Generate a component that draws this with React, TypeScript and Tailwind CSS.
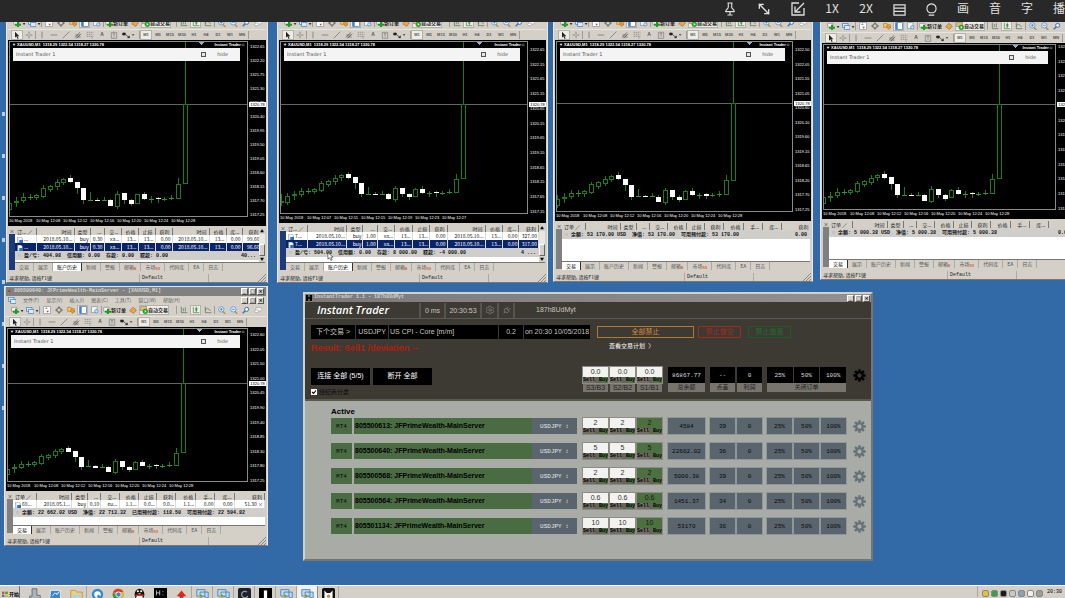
import { useState } from 'react'
import type { ReactNode } from 'react'
import clsx from 'clsx'
import { MoveDiagonal2, Settings, Plug } from 'lucide-react'

type Candle = { x: number; high: number; low: number; top: number; bottom: number; full?: boolean }

// x is counted in bars from the local peak, heights in thirds of a pixel
const candles: Candle[] = [
  { x: -10, high: 150, low: 188, top: 172, bottom: 180 },
  { x: -9, high: 145, low: 185, top: 157, bottom: 178 },
  { x: -8, high: 140, low: 170, top: 151, bottom: 155 },
  { x: -7, high: 128, low: 158, top: 139, bottom: 152 },
  { x: -6, high: 130, low: 150, top: 139, bottom: 139 },
  { x: -5, high: 130, low: 150, top: 134, bottom: 142 },
  { x: -4, high: 105, low: 142, top: 112, bottom: 140 },
  { x: -3, high: 103, low: 125, top: 106, bottom: 119 },
  { x: -2, high: 85, low: 118, top: 95, bottom: 110 },
  { x: -1, high: 84, low: 105, top: 86, bottom: 97 },
  { x: 0, high: 75, low: 98, top: 83, bottom: 96, full: true },
  { x: 1, high: 94, low: 132, top: 94, bottom: 113, full: true },
  { x: 2, high: 114, low: 160, top: 114, bottom: 150, full: true },
  { x: 3, high: 125, low: 150, top: 148, bottom: 148 },
  { x: 4, high: 144, low: 152, top: 148, bottom: 152, full: true },
  { x: 5, high: 140, low: 152, top: 149, bottom: 149 },
  { x: 6, high: 146, low: 168, top: 150, bottom: 167, full: true },
  { x: 7, high: 122, low: 176, top: 130, bottom: 170 },
  { x: 8, high: 129, low: 160, top: 129, bottom: 150, full: true },
  { x: 9, high: 145, low: 168, top: 150, bottom: 161, full: true },
  { x: 10, high: 130, low: 160, top: 132, bottom: 160 },
  { x: 11, high: 124, low: 148, top: 132, bottom: 146, full: true },
  { x: 12, high: 138, low: 158, top: 146, bottom: 146 },
  { x: 13, high: 140, low: 158, top: 143, bottom: 147, full: true },
  { x: 14, high: 140, low: 152, top: 146, bottom: 146 },
  { x: 15, high: 133, low: 150, top: 143, bottom: 143 },
  { x: 16, high: 82, low: 146, top: 100, bottom: 145 },
]

type ChartData = {
  height: string
  pad: string
  line: number
  peakX: number
  peakY: number
  scale: number
  prices: string[]
  times: string[]
}

function Candles({ line, peakX, peakY, scale }: ChartData) {
  const y = (v: number) => Math.round(peakY + ((v - 83) / 3) * scale)
  const x = (n: number) => Math.round(peakX + n * 6.74)
  return (
    <svg className="absolute inset-0 h-full w-full" shapeRendering="crispEdges">
      <rect x="0" y={line} width="100%" height="1" fill="#5f6663" />
      {candles.map((c) => (
        <g key={c.x}>
          <rect x={x(c.x)} y={y(c.high)} width="1" height={Math.max(1, y(c.low) - y(c.high))} fill="#1f7a22" />
          {c.full ? (
            <rect x={x(c.x) - 2} y={y(c.top)} width="5" height={Math.max(1, y(c.bottom) - y(c.top))} fill="#fff" />
          ) : c.top === c.bottom ? (
            <rect x={x(c.x) - 2} y={y(c.top)} width="5" height="1" fill="#2c9a30" />
          ) : (
            <rect
              x={x(c.x) - 1.5}
              y={y(c.top) + 0.5}
              width="4"
              height={Math.max(1, y(c.bottom) - y(c.top) - 1)}
              fill="#000"
              stroke="#1f7a22"
            />
          )}
        </g>
      ))}
      <rect x={x(17)} y="0" width="1" height={line} fill="#168018" />
      <rect x={x(17) - 1.5} y={line + 0.5} width="4" height={y(97) - line} fill="#000" stroke="#168018" />
      <path d={`M${x(17) + 14} 0h5l-2.5 3z`} fill="#8fb0c8" />
    </svg>
  )
}

function Chart(props: ChartData & { id: string }) {
  const { id, height, pad, line, prices, times } = props
  return (
    <div className={clsx('flex shrink-0 overflow-hidden bg-black pt-px pl-px font-["Liberation_Sans"] text-[4px] text-white', height)}>
      <div className="flex min-w-0 flex-1 flex-col">
        <div className="relative flex-1 overflow-hidden border border-[#8a8a8a]">
          <Candles {...props} />
          <div className="relative flex h-[6px] items-center justify-between pr-[2px] pl-[2px] leading-[6px] font-bold">
            <span>▼ XAUUSD,M1&nbsp; 1318.29 1322.54 1318.27 1320.78</span>
            <span>Instant Trader☺</span>
          </div>
          <div className="relative mr-[7px] ml-[3px] flex h-[13px] items-center bg-[#f4f4f4] px-[3px] font-['DejaVu_Sans'] text-[5px] text-[#555]">
            <span className="flex-1">Instant Trader 1</span>
            <input
              id={id}
              type="checkbox"
              className="mr-[11px] size-[5px] appearance-none border border-[#555] bg-[#e4e4ee]"
            />
            <label htmlFor={id} className="mr-[9px]">hide</label>
          </div>
        </div>
        <div className="flex h-[9px] items-start leading-[7px] whitespace-nowrap">
          {times.map((t) => (
            <span key={t} className="w-[27px] shrink-0">{t}</span>
          ))}
        </div>
      </div>
      <div className={clsx('relative flex w-[18px] shrink-0 flex-col justify-between pl-[2px] leading-[6px]', pad)}>
        {prices.map((p) => (
          <span key={p}>{p}</span>
        ))}
        <span className="absolute left-px w-[17px] bg-white text-center leading-[5px] text-black" style={{ top: line - 1 }}>
          1320.78
        </span>
      </div>
    </div>
  )
}

function Sep() {
  return <i className="h-[8px] w-px shrink-0 bg-[#a09c94]" />
}

const glyphs: Record<string, ReactNode> = {
  add: <><path d="M1 2h8v6H1z" fill="#f4f4f4" stroke="#888" /><path d="M6 4h3v3h3v3H9v3H6v-3H3V7h3z" fill="#1d9b22" /></>,
  windows: <><rect x="1" y="2" width="8" height="6" fill="#dceafa" stroke="#3a78c0" /><rect x="4" y="5" width="8" height="6" fill="#dceafa" stroke="#3a78c0" /></>,
  market: <><rect x="1" y="1" width="10" height="10" fill="#fff" stroke="#7d93ae" /><path d="M3 4l2-2 2 2z" fill="#2a9a30" /><path d="M5 7h4l-2 3z" fill="#d04020" /></>,
  target: <><circle cx="6" cy="6" r="3.5" fill="none" stroke="#555" strokeWidth="1.3" /><path d="M6 0v4M6 8v4M0 6h4M8 6h4" stroke="#555" /></>,
  folder: <><path d="M1 2h5l1 2h4v4H1z" fill="#f0c860" stroke="#b08020" /><path d="M5 6l2-2 2 3 3 1-4 3z" fill="#f0a030" stroke="#b07010" /></>,
  panel: <><rect x="1" y="1" width="10" height="10" fill="#fff" stroke="#2f6fb8" /><rect x="1" y="1" width="3" height="10" fill="#3a80cc" /></>,
  tester: <><rect x="1" y="1" width="8" height="9" fill="#eef4fa" stroke="#7d93ae" /><circle cx="8" cy="8" r="2.5" fill="#cfe4f6" stroke="#4a7db0" /></>,
  diamond: <path d="M1 7l5-5 5 4-4 5z" fill="#e8a848" stroke="#a86818" />,
  auto: <><rect x="1" y="1" width="9" height="6" fill="#e0c058" stroke="#888" /><circle cx="8" cy="8" r="4" fill="#23a02c" /><path d="M7 6l3 2-3 2z" fill="#fff" /></>,
  bars: <path d="M2 1v9h9M5 3v5M8 2v6" stroke="#4c6a4c" fill="none" />,
  candle: <><path d="M2 1v9h9M6.500 1v8" stroke="#387038" fill="none" /><rect x="5" y="3" width="3" height="4" fill="#2da033" /></>,
  curve: <path d="M2 1v9h9M2 7c2-6 4-3 8 0" stroke="#4c6a4c" fill="none" />,
  zoomIn: <><path d="M7 8l4 4" stroke="#c08a30" strokeWidth="2" /><circle cx="5" cy="5" r="4" fill="#e2f0fb" stroke="#3a80cc" /><path d="M3 5h4M5 3v4" stroke="#2868b0" /></>,
  zoomOut: <><path d="M7 8l4 4" stroke="#c08a30" strokeWidth="2" /><circle cx="5" cy="5" r="4" fill="#e2f0fb" stroke="#3a80cc" /><path d="M3 5h4" stroke="#2868b0" /></>,
  search: <><path d="M5 7l-4 4" stroke="#3a70b0" strokeWidth="2" /><circle cx="7" cy="5" r="3" fill="#f4f8fc" stroke="#3a70b0" strokeWidth="1.5" /></>,
  chat: <><ellipse cx="7" cy="5" rx="5" ry="3" fill="#f4f4f4" stroke="#999" /><ellipse cx="4" cy="8" rx="3" ry="2" fill="#fff" stroke="#999" /></>,
  cursor: <path d="M3 1v9l2-2 2 4 1.500-1-2-3h3z" fill="#222" />,
  cross: <path d="M6 1v4M6 7v4M1 6h4M7 6h4" stroke="#666" />,
  vline: <path d="M6 1v10" stroke="#666" />,
  hline: <path d="M1 6h10" stroke="#666" />,
  slope: <path d="M1 11L11 1" stroke="#666" />,
  channel: <path d="M1 10L9 2M4 11l7-7M2 6h7M3 9h7" stroke="#555" />,
  fibo: <path d="M1 2h10M1 5h10M1 8h10M9 8v4" stroke="#777" strokeDasharray="2 1" />,
  label: <path d="M2 2h8v9H2zM4 4h4M6 4v5" stroke="#777" fill="none" />,
  arrows: <path d="M1 3h4v3H1zM6 6l5 4M8 10h3V7" stroke="#222" fill="#222" />,
}

function Glyph({ name }: { name: string }) {
  return <svg viewBox="0 0 12 12" className="size-[8px] shrink-0">{glyphs[name]}</svg>
}

function ToolButton({ name, pressed, wide }: { name: string; pressed?: boolean; wide?: boolean }) {
  return (
    <button
      aria-label={name}
      className={clsx(
        'flex h-[10px] shrink-0 items-center justify-center',
        wide ? 'w-[12px]' : 'w-[11px]',
        pressed && 'border border-[#b5b1a9] bg-[#eeece6]'
      )}
    >
      <Glyph name={name} />
    </button>
  )
}

function Toolbars() {
  return (
    <>
      <div className="flex h-[12px] shrink-0 items-center gap-px overflow-hidden px-[3px] text-[5px] font-bold text-[#222]">
        <ToolButton name="add" />
        <span className="text-[4px]">▾</span>
        <ToolButton name="windows" />
        <span className="text-[4px]">▾</span>
        <Sep />
        <ToolButton name="market" />
        <ToolButton name="target" />
        <ToolButton name="folder" />
        <ToolButton name="panel" pressed />
        <ToolButton name="tester" />
        <Sep />
        <button className="flex items-center whitespace-nowrap"><Glyph name="add" />新订单</button>
        <ToolButton name="diamond" />
        <button className="flex h-[10px] items-center border border-[#b5b1a9] bg-[#eeece6] whitespace-nowrap"><Glyph name="auto" />自动交易</button>
        <i className="w-[5px]" />
        <Sep />
        <ToolButton name="bars" />
        <ToolButton name="candle" pressed />
        <ToolButton name="curve" />
        <Sep />
        <ToolButton name="zoomIn" />
        <ToolButton name="zoomOut" />
        <ToolButton name="search" />
        <ToolButton name="chat" />
      </div>
      <div className="flex h-[11px] shrink-0 items-center overflow-hidden border-t border-[#e8e5df] px-[3px] font-['Liberation_Sans'] text-[4px] font-bold text-[#555]">
        <ToolButton name="cursor" pressed wide />
        <ToolButton name="cross" wide />
        <Sep />
        <ToolButton name="vline" wide />
        <ToolButton name="hline" wide />
        <ToolButton name="slope" wide />
        <ToolButton name="channel" wide />
        <ToolButton name="fibo" wide />
        <button className="w-[12px] text-[5px]">A</button>
        <ToolButton name="label" wide />
        <ToolButton name="arrows" wide />
        <span className="mr-[5px] text-[4px]">▾</span>
        <Sep />
        {['M1', 'M5', 'M15', 'M30', 'H1', 'H4', 'D1', 'W1', 'MN'].map((p, i) => (
          <button key={p} className={clsx('h-[10px] w-[12px] shrink-0', i === 0 && 'border border-[#b5b1a9] bg-[#eeece6]')}>
            {p}
          </button>
        ))}
        <Sep />
      </div>
    </>
  )
}

function WindowButtons() {
  return (
    <div className="flex shrink-0 gap-px font-['DejaVu_Sans'] text-[5px] leading-[5px] font-bold text-black">
      {['_', '□', '×'].map((b) => (
        <button key={b} className="h-[7px] w-[7px] border border-t-white border-r-[#555] border-b-[#555] border-l-white bg-[#d4d0c8]">
          {b}
        </button>
      ))}
    </div>
  )
}

type Column = { name: string; width: string; left?: boolean }

const historyColumns: Column[] = [
  { name: '订...  ∕', width: 'w-[21px]', left: true },
  { name: '时间', width: 'w-[38px]' },
  { name: '类型', width: 'w-[16px]' },
  { name: '...', width: 'w-[14px]' },
  { name: '交...', width: 'w-[17px]' },
  { name: '价格', width: 'w-[17px]' },
  { name: '止损', width: 'w-[17px]' },
  { name: '获利', width: 'w-[17px]' },
  { name: '时间', width: 'w-[37px]' },
  { name: '价格', width: 'w-[17px]' },
  { name: '库...', width: 'w-[16px]' },
  { name: '获利', width: 'w-[19px]' },
]

const tradeColumns: Column[] = [
  { name: '订单  ∕', width: 'w-[23px]', left: true },
  { name: '时间', width: 'w-[35px]' },
  { name: '类型', width: 'w-[16px]' },
  { name: '...', width: 'w-[13px]' },
  { name: '交...', width: 'w-[18px]' },
  { name: '价格', width: 'w-[19px]' },
  { name: '止损', width: 'w-[18px]' },
  { name: '获利', width: 'w-[19px]' },
  { name: '价格', width: 'w-[20px]' },
  { name: '手...', width: 'w-[19px]' },
  { name: '库...', width: 'w-[19px]' },
  { name: '获利', width: 'w-[30px]' },
]

const tabs = ['交易', '展示', '账户历史', '新闻', '警报', '邮箱', '市场', '代码库', 'EA', '日志']
const badges: Record<string, string> = { 邮箱: '6', 市场: '53' }

type Terminal = {
  id: string
  place: string
  title?: string
  history?: boolean
  rows: string[][]
  summary: string
  total: string
  chart: ChartData
}

function OrderTable({ history, rows, summary, total }: Terminal) {
  const columns = history ? historyColumns : tradeColumns
  return (
    <div className="flex min-h-0 flex-1 px-[1px] pt-[2px]">
      <div className="flex w-[6px] shrink-0 flex-col text-center text-[5px] leading-[6px]">
        <button>×</button>
        <div className={clsx('flex-1', history ? 'bg-[#1c3a7c]' : 'bg-[#808080]')} />
      </div>
      <div className="flex min-w-0 flex-1 flex-col">
        <div className="flex min-h-0 flex-1 overflow-hidden bg-white">
          <div className="min-w-0 flex-1">
            <table className="w-full table-fixed border-collapse text-[5px] leading-[8px] whitespace-nowrap text-[#222]">
              <thead className="bg-[#d4d0c8] leading-[7px]">
                <tr>
                  {columns.map((c, i) => (
                    <th
                      key={i}
                      className={clsx('overflow-hidden border-r border-[#777] pr-[2px] font-normal', c.width, c.left ? 'pl-[2px] text-left' : 'text-right')}
                    >
                      {c.name}
                    </th>
                  ))}
                </tr>
              </thead>
              <tbody>
                {rows.map((row, r) => (
                  <tr key={r} className={clsx(r === 1 && 'bg-[#0a246a] text-white')}>
                    {row.map((cell, i) => (
                      <td key={i} className={clsx('overflow-hidden border-r border-[#ddd] pr-px', i === 0 ? 'text-left' : 'text-right')}>
                        {i === 0 && (
                          <svg viewBox="0 0 8 8" className="mr-px ml-[2px] inline size-[6px] align-middle">
                            <path d="M1 0h4l2 2v6H1z" fill="#fff" stroke="#7d93ae" />
                            <path d="M3 4h5v4H3z" fill="#2f6fb8" />
                          </svg>
                        )}
                        {cell}
                      </td>
                    ))}
                  </tr>
                ))}
              </tbody>
            </table>
            <div className="flex h-[9px] items-center justify-between bg-[#d0cecb] pr-[3px] pl-[3px] font-['Liberation_Mono','Noto_Sans_CJK_SC',monospace] text-[5px] leading-[8px] font-bold whitespace-pre text-[#111]">
              <span className="overflow-hidden"><span className="font-normal text-[#777]">○ </span>{summary}</span>
              <span>{total}</span>
            </div>
          </div>
          {history && (
            <div className="flex w-[6px] shrink-0 flex-col justify-between bg-[#e9e7e2] text-center text-[4px] leading-[6px]">
              <button className="bg-[#d4d0c8]">▲</button>
              <div className="mt-auto h-[12px] border border-white border-r-[#666] border-b-[#666] bg-[#d4d0c8]" />
              <button className="bg-[#d4d0c8]">▼</button>
            </div>
          )}
        </div>
        <div className="flex h-[8px] shrink-0 items-center border-t border-[#777] text-[5px] leading-[7px] whitespace-nowrap text-[#555]">
          {tabs.map((t, i) => {
            const active = history ? i === 2 : i === 0
            return (
              <button
                key={t}
                className={clsx('h-[8px] border-r px-[4px]', active ? 'border-[#333] bg-white text-black' : 'border-[#aaa]')}
              >
                {t}
                {badges[t] && <sub className="text-[4px] font-bold text-[#e0602a]">{badges[t]}</sub>}
              </button>
            )
          })}
        </div>
      </div>
    </div>
  )
}

function TerminalWindow(props: Terminal) {
  const { id, place, title, chart } = props
  return (
    <section className={clsx('absolute flex flex-col overflow-hidden border border-[#e9e7e2] border-b-[#777] bg-[#d4d0c8] pr-px pl-px', place)}>
      {title && (
        <>
          <div className="flex h-[9px] shrink-0 items-center justify-between bg-[#808080] px-[2px] font-['Liberation_Mono'] text-[5px] font-bold text-[#d8d4cc]">
            <span><span className="text-[#d03020]">▲</span> {title}</span>
            <WindowButtons />
          </div>
          <nav className="flex h-[8px] shrink-0 items-center gap-[7px] px-[2px] text-[5px] leading-[8px] whitespace-nowrap text-[#666]">
            <Glyph name="windows" />
            {['文件(F)', '显示(V)', '插入(I)', '图表(C)', '工具(T)', '窗口(W)', '帮助(H)'].map((m) => (
              <button key={m}>{m}</button>
            ))}
            <span className="flex-1" />
            <WindowButtons />
          </nav>
        </>
      )}
      <Toolbars />
      <Chart id={id} {...chart} />
      <OrderTable {...props} />
      <footer className="mt-[3px] flex h-[9px] shrink-0 items-center text-[5px] leading-[8px] text-[#222]">
        <span className="flex-1 pl-px">寻求帮助, 请按F1键</span>
        <span className="w-[69px] border-l border-[#aaa] pl-[2px] font-['Liberation_Mono']">Default</span>
        <span className="w-[50px] border-l border-[#aaa]">&nbsp;</span>
        <svg viewBox="0 0 8 8" className="size-[8px]"><path d="M0 8l8-8M3 8l5-5M6 8l2-2" stroke="#888" /></svg>
      </footer>
    </section>
  )
}

const times = ['10 May 2018', '10 May 12:08', '10 May 12:12', '10 May 12:16', '10 May 12:20', '10 May 12:24', '10 May 12:28']

const terminals: Terminal[] = [
  {
    id: 'hide-a',
    place: '-top-[6px] left-[6px] h-[267px] w-[262px]',
    history: true,
    rows: [
      ['...', '2018.05.10...', 'buy', '0.30', 'xa...', '13...', '13...', '0.00', '2018.05.10...', '13...', '0.00', '99.60'],
      ['...', '2018.05.10...', 'buy', '0.30', 'xa...', '13...', '13...', '0.00', '2018.05.10...', '13...', '0.00', '96.60'],
    ],
    summary: '盈/亏: 404.98  信用额: 0.00  存款: 0.00  取款: 0.00',
    total: '40...',
    chart: {
      height: 'h-[186px]', pad: 'pt-[3px] pb-[8px]', line: 62, peakX: 60, peakY: 136, scale: 1, times,
      prices: ['1322.65', '1322.20', '1321.75', '1321.30', '1320.85', '1320.40', '1319.95', '1319.50', '1319.05', '1318.60', '1318.15', '1317.70', '1317.25'],
    },
  },
  {
    id: 'hide-b',
    place: '-top-[6px] left-[277px] h-[267px] w-[271px]',
    history: true,
    rows: [
      ['7...', '2018.05.10...', 'buy', '1.00', 'xa...', '13...', '13...', '0.00', '2018.05.10...', '13...', '0.00', '327.00'],
      ['7...', '2018.05.10...', 'buy', '1.00', 'xa...', '13...', '13...', '0.00', '2018.05.10...', '13...', '0.00', '317.00'],
    ],
    summary: '盈/亏: 504.00  信用额: 0.00  存款: 8 000.00  取款: -4 000.00',
    total: '4 ...',
    chart: {
      height: 'h-[183px]', pad: 'pt-[6px] pb-[8px]', line: 62, peakX: 67, peakY: 132, scale: 0.9,
      times: ['10 May 2018', '10 May 12:07', '10 May 12:11', '10 May 12:15', '10 May 12:19', '10 May 12:23', '10 May 12:27'],
      prices: ['1322.65', '1322.15', '1321.65', '1321.15', '1320.65', '1320.15', '1319.65', '1319.15', '1318.65', '1318.15', '1317.65', '1317.15'],
    },
  },
  {
    id: 'hide-c',
    place: '-top-[6px] left-[553px] h-[266px] w-[260px]',
    rows: [],
    summary: '余额: 53 170.00 USD  净值: 53 170.00  可用预付款: 53 170.00',
    total: '0.00',
    chart: {
      height: 'h-[181px]', pad: 'pt-[6px] pb-[8px]', line: 61, peakX: 61, peakY: 133, scale: 0.97, times,
      prices: ['1322.50', '1322.05', '1321.55', '1321.05', '1320.60', '1320.10', '1319.60', '1319.15', '1318.65', '1318.20', '1317.70', '1317.25'],
    },
  },
  {
    id: 'hide-d',
    place: '-top-[3px] left-[820px] h-[261px] w-[256px]',
    rows: [],
    summary: '余额: 5 000.38 USD  净值: 5 000.38  可用预付款: 5 000.38',
    total: '0.00',
    chart: {
      height: 'h-[176px]', pad: 'pb-[7px]', line: 59, peakX: 60, peakY: 129, scale: 0.95, times,
      prices: ['1322.60', '1322.10', '1321.60', '1321.15', '1320.65', '1320.15', '1319.65', '1319.15', '1318.70', '1318.20', '1317.70', '1317.25'],
    },
  },
  {
    id: 'hide-e',
    place: 'top-[264px] left-[4px] h-[260px] w-[264px]',
    title: '805500640: JFPrimeWealth-MainServer - [XAUUSD,M1]',
    rows: [['69...', '2018.05.1...', 'buy', '0.10', 'eu...', '1.1...', '0.0...', '0.0...', '1.1...', '0.00', '0.00', '51.30  ×']],
    summary: '余额: 22 662.02 USD  净值: 22 713.32  已用预付款: 118.50  可用预付款: 22 594.82',
    total: '',
    chart: {
      height: 'h-[164px]', pad: 'pt-[4px] pb-[7px]', line: 54, peakX: 60, peakY: 119, scale: 0.85, times,
      prices: ['1322.60', '1322.05', '1321.50', '1321.00', '1320.45', '1319.90', '1319.40', '1318.85', '1318.30', '1317.80', '1317.25'],
    },
  },
]

const accounts = [
  { login: '805500613', lot: '2', balance: '4584', spread: '39' },
  { login: '805500640', lot: '5', balance: '22662.02', spread: '36' },
  { login: '805500568', lot: '2', balance: '5000.38', spread: '39' },
  { login: '805500564', lot: '0.6', balance: '1451.37', spread: '34' },
  { login: '805501134', lot: '10', balance: '53170', spread: '36' },
]

function LotBox({ lot, label, green }: { lot: string; label: string; green?: boolean }) {
  return (
    <div className="flex h-[16px] w-[25px] flex-col bg-[#66635b] outline-1 outline-[#8e8b84]">
      <input
        aria-label={label}
        defaultValue={lot}
        className={clsx("h-[10px] w-full text-center font-['Liberation_Sans'] text-[7px] leading-[10px]", green ? 'bg-[#4c7040] text-[#141c10]' : 'bg-[#f2f2f0] text-[#333]')}
      />
      <div className="flex h-[6px] justify-between font-['Liberation_Mono'] text-[5px] leading-[6px] font-bold text-black">
        <button className="bg-[#726e66]">Sell</button>
        <button className="bg-[#55704b]">Buy</button>
      </div>
    </div>
  )
}

function ValueRow({ values, head }: { values: string[]; head?: boolean }) {
  const cell = clsx(
    "flex h-[16px] items-center justify-center font-['Liberation_Mono'] text-[6px]",
    head ? 'bg-black text-[#ddd]' : 'bg-[#59646c] text-[#080a0c] outline-1 outline-[#8f979b]',
  )
  const caption = 'h-[9px] bg-[#77746d] text-center text-[6px] leading-[9px] text-[#23211d]'
  return (
    <>
      <div className="ml-[6px] w-[37px]">
        <div className={cell}>{values[0]}</div>
        {head && <div className={caption}>总余额</div>}
      </div>
      <div className="ml-[5px] flex gap-[2px]">
        <div className="w-[25px]">
          <div className={cell}>{values[1]}</div>
          {head && <div className={caption}>点差</div>}
        </div>
        <div className="w-[25px]">
          <div className={cell}>{values[2]}</div>
          {head && <div className={caption}>利润</div>}
        </div>
      </div>
      <div className="ml-[5px] w-[79px]">
        <div className={clsx('grid grid-cols-3', head ? 'gap-px' : 'gap-[2px]')}>
          {['25%', '50%', '100%'].map((p) => (
            <button key={p} className={cell}>{p}</button>
          ))}
        </div>
        {head && <div className={caption}>关闭订单</div>}
      </div>
      <button aria-label="设置" className="ml-[7px] flex h-[16px] w-[13px] items-center">
        <GearIcon className={head ? 'text-black' : 'text-[#667078]'} />
      </button>
    </>
  )
}

function GearIcon({ className }: { className: string }) {
  return (
    <svg viewBox="0 0 26 26" className={clsx('size-[13px]', className)}>
      <mask id="gear-hole" maskUnits="userSpaceOnUse" x="0" y="0" width="26" height="26">
        <rect width="26" height="26" fill="#fff" />
        <rect x="8" y="8" width="10" height="10" rx="5" fill="#000" />
      </mask>
      <g fill="currentColor" mask="url(#gear-hole)">
        {[0, 45, 90, 135].map((a) => (
          <rect key={a} x="10.500" y="0.500" width="5" height="25" rx="1" transform={`rotate(${a} 13 13)`} />
        ))}
      </g>
      <circle cx="13" cy="13" r="6.500" fill="none" stroke="currentColor" strokeWidth="4" />
    </svg>
  )
}

function InstantTrader() {
  const [grouped, setGrouped] = useState(true)
  const black = 'flex h-[14px] items-center justify-center bg-black'
  return (
    <section className="absolute top-[270px] left-[303px] flex h-[269px] w-[570px] flex-col border-2 border-[#d4d0c8] border-r-[#77746f] border-b-[#77746f] font-['Liberation_Sans','Noto_Sans_CJK_SC',sans-serif] text-[7px] whitespace-nowrap text-[#c8c5be]">
      <div className="flex h-[8px] shrink-0 items-center bg-linear-to-r from-[#7b7b7b] to-[#929090] pr-[1px] font-['Liberation_Mono'] text-[5px] font-bold text-[#d4d0c8]">
        <svg viewBox="0 0 8 8" className="mr-[2px] ml-[1px] size-[6px]"><path d="M0 0h3v8H0zM5 0h3v8H5zM3 3h2v2H3z" fill="#000" /></svg>
        <span className="flex-1">InstantTrader 1.1 - 187h88dMyt</span>
        <WindowButtons />
      </div>

      <div className="shrink-0 border-b-2 border-[#5c5850] bg-[#3d3a34]">
        <header className="flex h-[17px] items-center border-b border-[#5c5a54]">
          <h1 className="w-[114px] pl-[12px] font-['Open_Sans',sans-serif] text-[11px] leading-[16px] font-semibold text-white italic">Instant Trader</h1>
          <span className="w-[25px] border-l-2 border-[#57544d] text-center leading-[15px]">0 ms</span>
          <span className="w-[36px] border-l-2 border-[#57544d] text-center leading-[15px]">20:30:53</span>
          <button aria-label="设置" className="flex h-[15px] w-[17px] items-center justify-center border-l-2 border-[#57544d] text-[#777]"><Settings size={10} strokeWidth={2} /></button>
          <button aria-label="连接" className="flex h-[15px] w-[18px] items-center justify-center border-x-2 border-[#57544d] text-[#888]"><Plug size={9} className="rotate-45" /></button>
          <span className="pl-[21px]">187h8UdMyt</span>
        </header>

        {/* next event */}
        <div className="mt-[6px] flex items-center gap-px pl-[6px]">
          <button className={clsx(black, 'w-[44px]')}>下个交易 &gt;</button>
          <div className={clsx(black, 'w-[32px]')}>USDJPY</div>
          <div className="flex h-[14px] w-[109px] items-center bg-black pl-px">US CPI - Core [m/m]</div>
          <div className={clsx(black, 'w-[24px]')}>0.2</div>
          <div className={clsx(black, 'w-[66px]')}>on 20:30 10/05/2018</div>
          <button className="ml-[6px] h-[12px] w-[97px] border border-[#b07a34] leading-[10px] text-[#cc8c3c]">全部禁止</button>
          <button className="ml-[3px] h-[12px] w-[43px] border border-[#9c2c1c] leading-[10px] text-[#a02c1c]">禁止做空</button>
          <button className="ml-[6px] h-[12px] w-[43px] border border-[#1d5c2a] leading-[10px] text-[#1f7030]">禁止做涨</button>
        </div>
        <div className="flex h-[20px] items-start pl-[6px]">
          <p className="w-[298px] pt-[3px] text-[9px] leading-[12px] font-bold text-[#b0200f]">Result: Sell1 /deviation --</p>
          <button className="pt-[3px] text-[6px] leading-[8px] text-white">查看交易计划 &nbsp;<span>〉</span></button>
        </div>

        <div className="mt-[8px] flex h-[32px] items-start pr-[5px] pl-[6px]">
          <div className="flex-1">
            <div className="mt-px flex gap-[3px] text-white">
              <button className="h-[17px] w-[59px] bg-black">连接 全部 (5/5)</button>
              <button className="h-[17px] w-[59px] bg-black">断开 全部</button>
            </div>
            <label className="mt-[3px] flex items-center gap-[2px] text-[6px] leading-[8px] text-[#0c0b0a]">
              <span className="relative flex size-[6px]">
                <input
                  type="checkbox"
                  checked={grouped}
                  onChange={(e) => setGrouped(e.target.checked)}
                  className="size-[6px] appearance-none bg-white"
                />
                {grouped && <svg viewBox="0 0 8 8" className="pointer-events-none absolute inset-0"><path d="M1.500 4l2 2 3-4" fill="none" stroke="#000" strokeWidth="1.500" /></svg>}
              </span>
              经纪商分类
            </label>
          </div>
          <div className="flex gap-[2px]">
            {['S3/B3', 'S2/B2', 'S1/B1'].map((s) => (
              <div key={s} className="w-[25px]">
                <LotBox lot="0.0" label={s} />
                <div className="h-[9px] bg-[#77746d] text-center leading-[9px] text-[#23211d]">{s}</div>
              </div>
            ))}
          </div>
          <ValueRow head values={['86867.77', '--', '0']} />
        </div>
      </div>

      <div className="flex-1 bg-[#a8aba6] pt-[5px] pr-[5px] pl-[26px]">
        <h2 className="text-[8px] leading-[12px] font-bold text-black">Active</h2>
        <div className="flex flex-col gap-[9px]">
          {accounts.map((a) => (
            <div key={a.login} className="flex h-[16px] items-stretch">
              <div className="flex w-[21px] items-center justify-center bg-[#4a6c43] font-['Liberation_Mono'] text-[6px] text-[#060a04]">MT4</div>
              <div className="ml-[2px] flex flex-1 items-center bg-[#4a6c43] pl-px font-bold text-black">{a.login}: JFPrimeWealth-MainServer</div>
              <button className="mr-[6px] w-[45px] bg-[#59646c] font-['Liberation_Mono'] text-[6px] text-[#e4e6e8]">USDJPY ↕</button>
              <div className="flex gap-[2px]">
                <LotBox lot={a.lot} label={a.login + ' S3'} />
                <LotBox lot={a.lot} label={a.login + ' S2'} />
                <LotBox lot={a.lot} label={a.login + ' S1'} green />
              </div>
              <ValueRow values={[a.balance, a.spread, '0']} />
            </div>
          ))}
        </div>
      </div>
    </section>
  )
}

const taskIcons: ReactNode[] = [
  <path d="M5 1h6v8h4v5H2v-4h3z" fill="#aab2ba" stroke="#59636c" />,
  <path d="M2 3h12v10H1zM4 10l3-4 3 2 3-4" fill="#3a86cc" stroke="#e8f2fa" />,
  <><path d="M1 3h6l1 2h7v9H1z" fill="#f0d078" stroke="#b99440" /><path d="M3 8h10v6H3z" fill="#a8d4ee" /></>,
  <><circle cx="8" cy="8" r="5.500" fill="#fff" stroke="#2f8ad8" strokeWidth="3" /><path d="M8 9l6 5" stroke="#2f8ad8" strokeWidth="3" /></>,
  <><circle cx="8" cy="8" r="7" fill="#e0b820" /><path d="M1 6a7 7 0 0 1 13-1H8z" fill="#d8402c" /><path d="M1 6a7 7 0 0 0 6 9l3-6z" fill="#2f9c48" /><circle cx="8" cy="8" r="3.200" fill="#3f80e0" stroke="#fff" /></>,
  <><ellipse cx="8" cy="8" rx="6" ry="7" fill="#111" /><ellipse cx="8" cy="12" rx="4" ry="3" fill="#fff" /><circle cx="6" cy="4" r="1.300" fill="#fff" /><circle cx="10" cy="4" r="1.300" fill="#fff" /><path d="M3 8h10v2H3z" fill="#d8301c" /><path d="M6 6h4l-2 2z" fill="#f0a020" /></>,
  <><rect width="16" height="16" fill="#000" /><path d="M3 3v6M3 6h4M7 3v6M11 4v1M11 8v1" stroke="#ddd" /></>,
  <path d="M8 3l6 7h-3l-3 4-3-4H2z" fill="#e02818" />,
  <TradeAppIcon />,
  <TradeAppIcon />,
  <><rect width="16" height="16" rx="2" fill="#1c222a" /><path d="M11 5a4 4 0 1 0 1 5" fill="none" stroke="#99a" strokeWidth="1.500" /></>,
  <><rect width="16" height="16" fill="#000" /><path d="M6 3h4v11H6z" fill="#fff" /></>,
  <TradeAppIcon />,
  <TradeAppIcon />,
  <><rect width="16" height="16" rx="2" fill="#111" /><path d="M3 3l3 3h4l3-3v11H3z" fill="#fff" /><circle cx="8" cy="10" r="2" fill="#d88030" /></>,
]

function TradeAppIcon() {
  return (
    <>
      <path d="M1 2h10v8H1zM5 5h10v7H5z" fill="#bcdcf4" stroke="#3a7ab8" />
      <circle cx="6" cy="11" r="3" fill="#e8b040" />
      <path d="M6 11h6v4H6z" fill="#fff" stroke="#3a7ab8" />
      <path d="M4 10l2-2 2 2z" fill="#38a048" />
    </>
  )
}

function Taskbar() {
  return (
    <footer className="flex h-[13px] shrink-0 items-start overflow-hidden border-t border-white bg-[#d4d0c8] text-[6px]">
      <button className="mr-[4px] flex h-[16px] w-[20px] shrink-0 items-center gap-px border-r border-[#777] text-[5px] font-bold whitespace-nowrap">
        <svg viewBox="0 0 10 10" className="ml-[2px] size-[6px]">
          <path d="M0 1h4v4H0z" fill="#e0502c" /><path d="M5 1h5v4H5z" fill="#58a838" /><path d="M0 6h4v4H0z" fill="#3878d0" /><path d="M5 6h5v4H5z" fill="#e8b828" />
        </svg>
        开始
      </button>
      {taskIcons.map((icon, i) => (
        <button
          key={i}
          aria-label={'任务 ' + (i + 1)}
          className={clsx('flex h-[18px] w-[21px] shrink-0 justify-center border-r pt-[2px]', i === 13 ? 'border-[#888] bg-[#f2f0ec]' : i > 6 || i === 2 ? 'border-[#aaa69e]' : 'border-transparent')}
        >
          <svg viewBox="0 0 16 16" className="size-[13px]">{icon}</svg>
        </button>
      ))}
      <div className="ml-auto flex items-start gap-[2px] border-l border-[#aaa69e] pt-[4px] pr-[3px] pl-[4px]">
        {['bg-[#e8c030]', 'bg-[#38a048]', 'bg-[#1a1a1a]', 'bg-[#c8c8c8]', 'bg-[#8aa0b8]', 'bg-[#f0f0f0]', 'bg-[#98a098]'].map((c) => (
          <i key={c} className={clsx('size-[7px] rounded-xs border border-[#888]', c)} />
        ))}
        <time className="ml-[2px] font-['Liberation_Mono'] text-[5px] leading-[5px]">20:30</time>
      </div>
    </footer>
  )
}

function PlayerBar() {
  const item = 'flex w-8 shrink-0 items-center justify-center'
  const wide = 'flex w-[34px] shrink-0 items-center justify-center'
  return (
    <header className="-mr-[10px] flex h-[22px] shrink-0 items-center justify-end overflow-hidden bg-[#282828] pb-[6px] text-[12px] leading-[16px] text-[#e0e0e0]">
      <div className="flex h-[16px]">
        <button aria-label="置顶" className={wide}>
          <svg viewBox="0 0 14 16" className="mt-[2px] h-[14px] w-[12px]" fill="none" stroke="currentColor" strokeWidth="1.300">
            <path d="M4 1h6M5 1v5c0 2-3 2-3 5h10c0-3-3-3-3-5V1M7 11v4M4 15h6" />
          </svg>
        </button>
        <button aria-label="缩放" className={wide}><MoveDiagonal2 size={16} strokeWidth={2} className="mt-[2px]" /></button>
        <button aria-label="小窗" className={wide}>
          <svg viewBox="0 0 14 14" className="mt-[2px] size-[14px]" fill="none" stroke="currentColor" strokeWidth="1.300">
            <path d="M8 1H1v12h12V6M13 1L5 9M4 4.500V10h5.500" />
          </svg>
        </button>
        <button className={wide}>1X</button>
        <button className={wide}>2X</button>
        <button aria-label="列表" className={item}>
          <svg viewBox="0 0 14 14" className="mt-[2px] size-[13px]" fill="none" stroke="currentColor" strokeWidth="1.300">
            <path d="M1 2h12v11H1zM1 5.500h12M1 9h12" />
          </svg>
        </button>
        <button aria-label="灯光" className={item}>
          <svg viewBox="0 0 14 14" className="mt-[2px] size-[13px]" fill="none" stroke="currentColor" strokeWidth="1.300">
            <path d="M5 10.500a5 5 0 1 1 4 0zM4 13h6" />
          </svg>
        </button>
        {['画', '音', '字', '播'].map((t) => (
          <button key={t} className={item}>{t}</button>
        ))}
      </div>
    </header>
  )
}

export default function App() {
  return (
    <div className="flex h-screen flex-col overflow-hidden bg-[#316aa6] font-['Noto_Sans_CJK_SC',sans-serif]">
      <PlayerBar />
      <main className="relative min-h-0 flex-1 overflow-hidden">
        <div className="flex w-[6px] flex-col items-center gap-[38px] pt-[90px]">
          {[0, 1, 2, 3, 4, 5, 6, 7].map((i) => (
            <i key={i} className="h-[4px] w-[3px] bg-[#b8cfe4]" />
          ))}
        </div>
        {terminals.map((t) => (
          <TerminalWindow key={t.id} {...t} />
        ))}
        <InstantTrader />
        <svg viewBox="0 0 10 14" className="absolute top-[230px] left-[327px] h-[9px] w-[7px]">
          <path d="M1 1v10l2.500-2 2 4 2-1-2-4H9z" fill="#fff" stroke="#333" />
        </svg>
      </main>
      <Taskbar />
    </div>
  )
}
